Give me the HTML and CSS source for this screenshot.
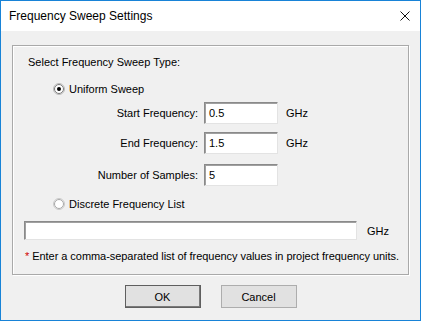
FILE: index.html
```html
<!DOCTYPE html>
<html lang="en">
<head>
    <meta charset="UTF-8">
    <title>Frequency Sweep Settings</title>
    <link rel="stylesheet" href="styles.css">
</head>
<body>
<div class="window">
    <div class="title-bar">
        <span class="title">Frequency Sweep Settings</span>
        <svg class="close" width="10" height="10" viewBox="0 0 10 10">
            <path d="M0.5 0.5 L9.5 9.5 M9.5 0.5 L0.5 9.5" stroke="#111" stroke-width="1" fill="none"/>
        </svg>
    </div>
    <div class="content">
        <div class="group">
            <div class="group-label">Select Frequency Sweep Type:</div>

            <div class="radio-row first">
                <svg class="radio" width="12" height="12" viewBox="0 0 12 12">
                    <circle cx="6" cy="6" r="5.5" fill="#fff" stroke="#b9b9b9"/>
                    <circle cx="6" cy="6" r="4.5" fill="#fff" stroke="#7a7a7a"/>
                    <circle cx="6" cy="6" r="2" fill="#000"/>
                </svg>
                <span>Uniform Sweep</span>
            </div>

            <div class="field-row row-start">
                <label class="field-label">Start Frequency:</label>
                <div class="input">0.5</div>
                <span class="unit">GHz</span>
            </div>
            <div class="field-row row-end">
                <label class="field-label">End Frequency:</label>
                <div class="input">1.5</div>
                <span class="unit">GHz</span>
            </div>
            <div class="field-row row-samples">
                <label class="field-label">Number of Samples:</label>
                <div class="input">5</div>
            </div>

            <div class="radio-row second">
                <svg class="radio" width="12" height="12" viewBox="0 0 12 12">
                    <circle cx="6" cy="6" r="5.5" fill="#fff" stroke="#c8c8c8"/>
                    <circle cx="6" cy="6" r="4.5" fill="#fff" stroke="#a8a8a8"/>
                </svg>
                <span>Discrete Frequency List</span>
            </div>

            <div class="list-row">
                <div class="input wide"></div>
                <span class="unit">GHz</span>
            </div>

            <div class="note"><span class="star">*</span> Enter a comma-separated list of frequency values in project frequency units.</div>
        </div>

        <div class="buttons">
            <button class="btn default">OK</button>
            <button class="btn">Cancel</button>
        </div>
    </div>
</div>
</body>
</html>
```

FILE: styles.css
```css
body {
    margin: 0;
    padding: 0;
    font-family: Tahoma, "Liberation Sans", Arial, sans-serif;
    font-size: 11px;
    color: #000;
}

.window {
    width: 421px;
    height: 321px;
    box-sizing: border-box;
    border: 1px solid #1883d7;
    background: #f0f0f0;
    display: flex;
    flex-direction: column;
}

.title-bar {
    height: 30px;
    background: #fff;
    display: flex;
    align-items: center;
    justify-content: space-between;
    padding: 0 10px 0 8px;
}

.title {
    font-family: "Segoe UI", "Liberation Sans", sans-serif;
    font-size: 12px;
    color: #000;
    margin-top: -1px;
}

.close {
    display: block;
    margin-top: -1px;
}

.content {
    flex: 1;
    padding: 14px 11px 0 11px;
}

.group {
    height: 230px;
    box-sizing: border-box;
    border: 1px solid #a9a9a9;
    box-shadow: inset 1px 1px 0 #fff, 1px 1px 0 #fff;
    padding: 8px 11px 0 11px;
}

.group-label {
    height: 16px;
    line-height: 16px;
    padding-left: 4px;
}

.radio-row {
    height: 16px;
    display: flex;
    align-items: center;
    padding-left: 29px;
    gap: 4px;
}

.radio-row.first {
    margin-top: 11px;
}

.radio-row.second {
    margin-top: 10px;
}

.radio {
    display: block;
}

.field-row {
    display: flex;
    align-items: center;
    padding-left: 4px;
}

.row-start {
    margin-top: 5px;
}

.row-end {
    margin-top: 8px;
}

.row-samples {
    margin-top: 10px;
}

.field-label {
    width: 170px;
    text-align: right;
    margin-right: 6px;
}

.input {
    width: 74px;
    height: 22px;
    box-sizing: border-box;
    background: #fff;
    border: 1px solid;
    border-color: #8a8a8a #e3e3e3 #e3e3e3 #8a8a8a;
    box-shadow: inset 1px 1px 0 #a0a0a0;
    padding: 3px 0 0 4px;
    line-height: 14px;
}

.field-row .unit {
    margin-left: 8px;
}

.list-row {
    display: flex;
    align-items: center;
    margin-top: 9px;
}

.input.wide {
    width: 333px;
    height: 19px;
}

.list-row .unit {
    margin-left: 10px;
}

.note {
    margin-top: 8px;
    padding-left: 1px;
    height: 16px;
    line-height: 16px;
    white-space: nowrap;
    letter-spacing: -0.05px;
}

.star {
    color: #d00000;
}

.buttons {
    display: flex;
    justify-content: center;
    gap: 20px;
    margin-top: 10px;
}

.btn {
    width: 76px;
    height: 23px;
    box-sizing: border-box;
    font-family: Tahoma, "Liberation Sans", Arial, sans-serif;
    font-size: 11px;
    color: #000;
    background: #e1e1e1;
    border: 1px solid #adadad;
    padding: 0;
}

.btn.default {
    border: 1px solid #5f5f5f;
    box-shadow: inset -1px -1px 0 #7a7a7a;
}
```
